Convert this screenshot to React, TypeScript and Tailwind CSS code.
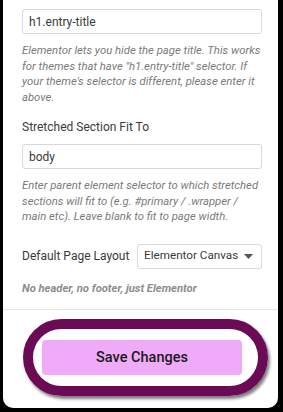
import React from "react";

export default function App() {
  return (
    <div className="w-[283px] h-[412px] bg-black overflow-hidden" style={{ fontFamily: "Roboto, 'Liberation Sans', sans-serif" }}>
      <div className="ml-[3px] w-[275px] h-[408px] bg-white rounded-b-[10px] flex flex-col">
        <div className="pl-[19px] pr-[16px] pt-[9px]">
          <div className="h-[25px] border border-[#d5d8dc] rounded-[3px] flex items-center px-[6px] text-[12px] text-[#3a3a3a]">
            h1.entry-title
          </div>
          <p className="mt-[9px] text-[11.3px] leading-[15.5px] italic text-[#7a7a7a]">
            Elementor lets you hide the page title. This works for themes that have "h1.entry-title" selector. If your theme's selector is different, please enter it above.
          </p>
          <div className="mt-[14px] text-[12px] text-[#3a3a3a] leading-[16px]">Stretched Section Fit To</div>
          <div className="mt-[9px] h-[25px] border border-[#d5d8dc] rounded-[3px] flex items-center px-[6px] text-[12px] text-[#3a3a3a]">
            body
          </div>
          <p className="mt-[9px] text-[11.3px] leading-[15.5px] italic text-[#7a7a7a]">
            Enter parent element selector to which stretched sections will fit to (e.g. #primary / .wrapper / main etc). Leave blank to fit to page width.
          </p>
          <div className="mt-[19px] flex items-center">
            <div className="w-[115px] text-[12px] text-[#3a3a3a] whitespace-nowrap">Default Page Layout</div>
            <div className="flex-1 h-[25px] border border-[#d5d8dc] rounded-[3px] flex items-center justify-between pl-[6px] pr-[8px] text-[11.7px] text-[#3a3a3a] whitespace-nowrap">
              <span>Elementor Canvas</span>
              <svg width="9" height="5" viewBox="0 0 9 5"><path d="M0 0h9L4.5 5z" fill="#555" /></svg>
            </div>
          </div>
          <div className="mt-[12px] text-[11.2px] font-bold italic text-[#8a8d91]">No header, no footer, just Elementor</div>
        </div>
        <div className="mt-[12px] border-t border-[#e6e6e6]" />
        <div className="pl-[20px] pt-[9px]">
          <div className="w-[245px] h-[77px] rounded-full border-[10px] border-[#6b0b55] flex items-center pl-[9px] shadow-[2px_3px_3px_rgba(0,0,0,0.5)]">
            <div className="w-[200px] h-[35px] rounded-[4px] bg-[#efaaf8] flex items-center justify-center text-[14.5px] font-medium text-[#1a1a1a]">
              Save Changes
            </div>
          </div>
        </div>
      </div>
    </div>
  );
}
